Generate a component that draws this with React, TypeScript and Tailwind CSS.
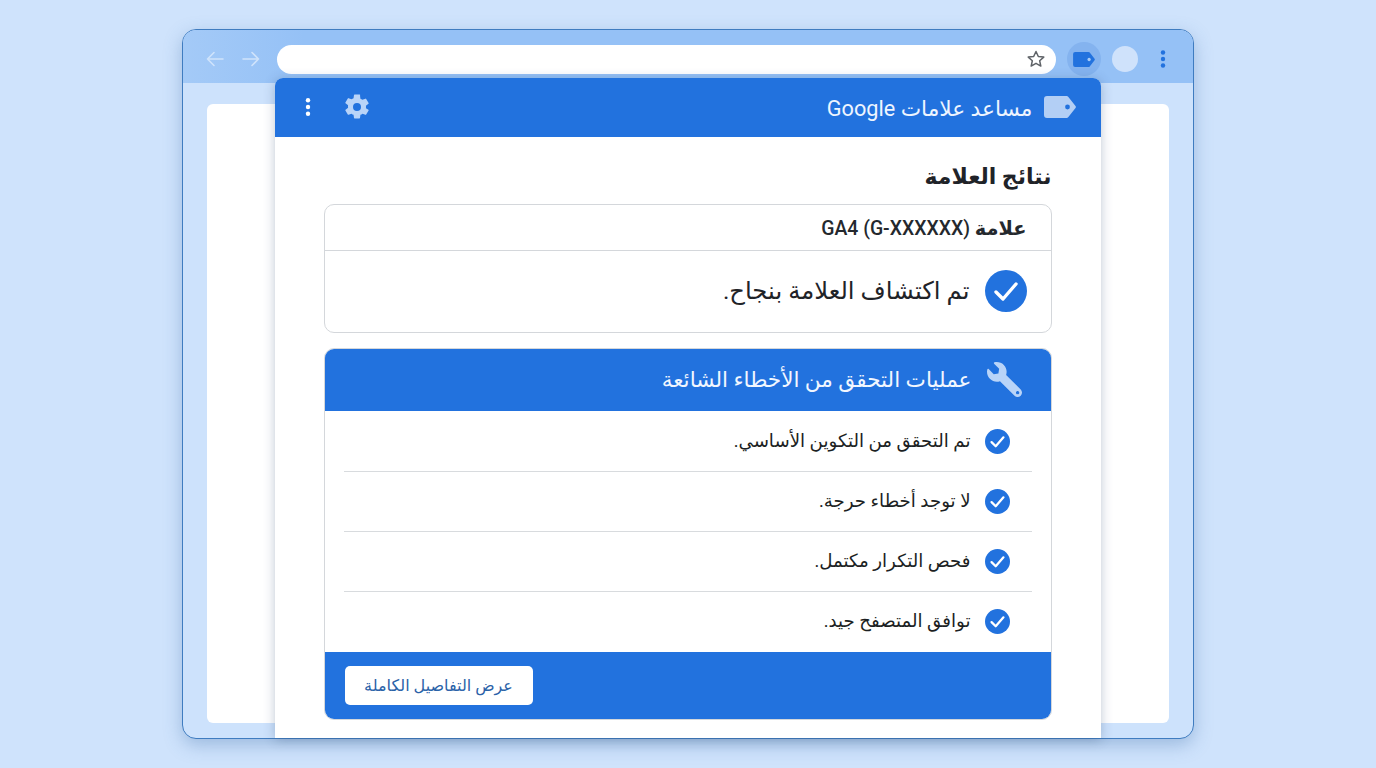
import React from "react";
import { FaWrench } from "react-icons/fa";

function Check({ size, stroke }: { size: number; stroke: number }) {
  return (
    <svg width={size} height={size} viewBox="0 0 42 42" className="shrink-0">
      <circle cx="21" cy="21" r="21" fill="#2272de" />
      <path d="M11 22l7 7 13-15" fill="none" stroke="#fff" strokeWidth={stroke} strokeLinecap="round" strokeLinejoin="round" />
    </svg>
  );
}

function TagIcon({ w, h, fill, dot }: { w: number; h: number; fill: string; dot: string }) {
  return (
    <svg width={w} height={h} viewBox="0 0 32 22" className="shrink-0">
      <path d="M3 0H22.5a2.5 2.5 0 0 1 1.9.9L31.5 10a1.6 1.6 0 0 1 0 2L24.4 21.1a2.5 2.5 0 0 1-1.9.9H3a3 3 0 0 1-3-3V3a3 3 0 0 1 3-3z" fill={fill} />
      <circle cx="23.5" cy="11" r="2.4" fill={dot} />
    </svg>
  );
}

const rows = [
  "تم التحقق من التكوين الأساسي.",
  "لا توجد أخطاء حرجة.",
  "فحص التكرار مكتمل.",
  "توافق المتصفح جيد.",
];

export default function App() {
  return (
    <div className="w-[1376px] h-[768px] overflow-hidden bg-[#cfe3fc] flex flex-col items-center pt-[29px] font-['Roboto','Noto_Sans','DejaVu_Sans',sans-serif]">
      <div className="relative w-[1012px] h-[710px] rounded-[14px] border-[1.5px] border-[#3f7cc0] bg-[#cde2fc] shadow-[0_6px_18px_rgba(60,110,170,0.35)] flex flex-col">
        <div className="h-[53px] rounded-t-[13px] bg-gradient-to-r from-[#a4caf7] to-[#95c1f6] to-[12%] flex items-center pl-[22px] pt-[5px]">
          <svg width="20" height="20" viewBox="0 0 20 20" fill="none" stroke="#cfe3fb" strokeWidth="1.6" strokeLinecap="round" strokeLinejoin="round">
            <path d="M18 10H2.5M9 3.5L2.5 10 9 16.5" />
          </svg>
          <svg className="ml-[16px]" width="20" height="20" viewBox="0 0 20 20" fill="none" stroke="#cfe3fb" strokeWidth="1.6" strokeLinecap="round" strokeLinejoin="round">
            <path d="M2 10h15.5M11 3.5L17.5 10 11 16.5" />
          </svg>
          <div className="ml-[16px] w-[779px] h-[29px] rounded-full bg-white flex items-center justify-end pr-[10px]">
            <svg width="20" height="20" viewBox="0 0 24 24" fill="none" stroke="#5f6368" strokeWidth="1.8" strokeLinejoin="round">
              <path d="M12 3l2.8 6 6.5.7-4.9 4.4 1.4 6.4L12 17.2l-5.8 3.3 1.4-6.4L2.7 9.7 9.2 9z" />
            </svg>
          </div>
          <div className="ml-[11px] w-[34px] h-[34px] rounded-full bg-[#84b3ef] flex items-center justify-center">
            <TagIcon w={22} h={15} fill="#2272de" dot="#a9ccf6" />
          </div>
          <div className="ml-[11px] w-[26px] h-[26px] rounded-full bg-[#cfe2fb]" />
          <svg className="ml-[22px]" width="6" height="20" viewBox="0 0 6 20" fill="#2272de">
            <circle cx="3" cy="3.5" r="2.2" /><circle cx="3" cy="10" r="2.2" /><circle cx="3" cy="16.5" r="2.2" />
          </svg>
        </div>
        <div className="flex-1 px-[24px] pt-[21px] pb-[15px]">
          <div className="h-full rounded-[6px] bg-white" />
        </div>

        <div dir="rtl" className="absolute left-[91.5px] top-[47.5px] w-[826px] h-[660px] rounded-t-[8px] bg-white shadow-[0_2px_12px_rgba(40,70,110,0.3)] flex flex-col">
          <div className="h-[59px] shrink-0 rounded-t-[8px] bg-[#2272de] flex items-center pr-[25px] pl-[30px]">
            <TagIcon w={32} h={22} fill="#b3cff5" dot="#2272de" />
            <span className="mr-[11px] mt-[3px] text-[21.7px] leading-none text-[#eef5ff]">مساعد علامات Google</span>
            <svg className="mr-auto" width="30" height="30" viewBox="0 0 24 24" fill="#b9d4f8">
              <path d="M19.14 12.94c.04-.3.06-.61.06-.94s-.02-.64-.07-.94l2.03-1.58a.49.49 0 0 0 .12-.61l-1.92-3.32a.49.49 0 0 0-.59-.22l-2.39.96a7 7 0 0 0-1.62-.94l-.36-2.54A.48.48 0 0 0 13.92 2h-3.84a.48.48 0 0 0-.48.41l-.36 2.54c-.59.24-1.13.57-1.62.94l-2.39-.96a.49.49 0 0 0-.59.22L2.72 8.47a.48.48 0 0 0 .12.61l2.03 1.58c-.05.3-.07.63-.07.94s.02.64.07.94l-2.03 1.58a.49.49 0 0 0-.12.61l1.92 3.32c.12.22.37.29.59.22l2.39-.96c.5.38 1.03.7 1.62.94l.36 2.54c.05.24.24.41.48.41h3.84c.24 0 .44-.17.47-.41l.36-2.54c.59-.24 1.13-.56 1.62-.94l2.39.96c.22.08.47 0 .59-.22l1.92-3.32a.48.48 0 0 0-.12-.61zM12 15.2A3.2 3.2 0 1 1 12 8.8a3.2 3.2 0 0 1 0 6.4z" />
            </svg>
            <svg className="mr-[31px]" width="6" height="20" viewBox="0 0 6 20" fill="#fff">
              <circle cx="3" cy="3.2" r="2.2" /><circle cx="3" cy="10" r="2.2" /><circle cx="3" cy="16.8" r="2.2" />
            </svg>
          </div>

          <div className="flex-1 px-[49px]">
            <h1 className="mt-[25px] h-[28px] text-[22px] leading-[30px] font-bold text-[#1f2328]">نتائج العلامة</h1>
            <div className="mt-[14px] h-[129px] rounded-[10px] border border-[#d4d7db] flex flex-col">
              <div className="h-[46px] shrink-0 border-b border-[#d4d7db] flex items-center pr-[24px] pt-[3px] text-[19.4px] font-medium text-[#24282d]">
                <span><span className="font-bold">علامة</span> (G-XXXXXX) GA4</span>
              </div>
              <div className="flex-1 flex items-center pr-[24px]">
                <Check size={42} stroke={3.4} />
                <span className="mr-[15px] text-[24.3px] leading-none text-[#1f2328]">تم اكتشاف العلامة بنجاح.</span>
              </div>
            </div>

            <div className="mt-[15px] h-[372px] rounded-[10px] border border-[#d4d7db] overflow-hidden flex flex-col">
              <div className="h-[62px] shrink-0 bg-[#2272de] flex items-center pr-[29px] text-[#f2f7ff]">
                <FaWrench className="shrink-0 -scale-x-100 text-[#b9d4f8] text-[35px]" />
                <span className="mr-[15px] text-[21.6px] leading-none">عمليات التحقق من الأخطاء الشائعة</span>
              </div>
              <div className="flex-1 px-[19px] flex flex-col">
                {rows.map((r, i) => (
                  <div
                    key={r}
                    className={
                      i === 0
                        ? "h-[61px] pt-[1px] flex items-center pr-[21.5px] border-b border-[#d8dbde]"
                        : i === 3
                          ? "h-[60px] pb-[1px] flex items-center pr-[21.5px]"
                          : "h-[60px] flex items-center pr-[21.5px] border-b border-[#d8dbde]"
                    }
                  >
                    <Check size={25} stroke={3.8} />
                    <span className="mr-[14.5px] mt-[1px] text-[18.2px] leading-none text-[#1c1f23]">{r}</span>
                  </div>
                ))}
              </div>
              <div className="h-[67px] shrink-0 bg-[#2272de] flex items-center justify-end pl-[20px]">
                <button className="w-[188px] h-[39px] pt-[2px] rounded-[5px] bg-white text-[16px] text-[#2a62a8]">عرض التفاصيل الكاملة</button>
              </div>
            </div>
          </div>
        </div>
      </div>
    </div>
  );
}
